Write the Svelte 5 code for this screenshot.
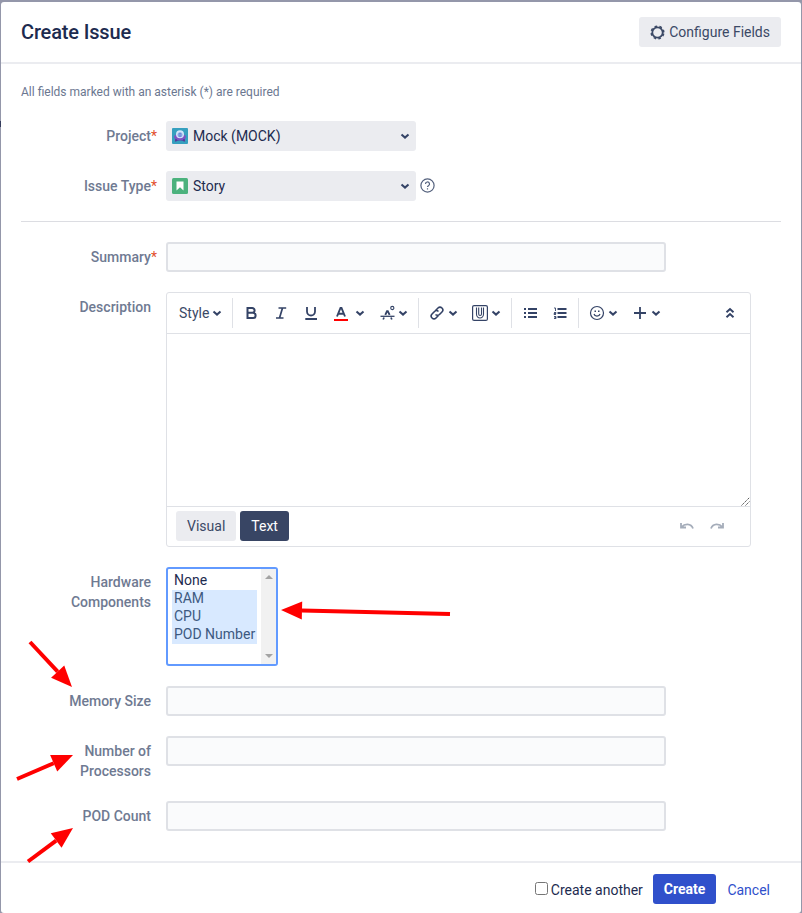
<script>
  const tools = [
    { icon: 'bold', gap: 10 },
    { icon: 'italic', gap: 14 },
    { icon: 'underline', gap: 14 },
    { icon: 'color', gap: 14 },
    { icon: 'chevron', gap: 6 },
    { icon: 'clear', gap: 15 },
    { icon: 'chevron', gap: 2 },
    { icon: 'sep', gap: 10 },
    { icon: 'link', gap: 10 },
    { icon: 'chevron', gap: 3 },
    { icon: 'attach', gap: 14 },
    { icon: 'chevron', gap: 3 },
    { icon: 'sep', gap: 10 },
    { icon: 'bullets', gap: 10 },
    { icon: 'numbers', gap: 14 },
    { icon: 'sep', gap: 10 },
    { icon: 'smile', gap: 10 },
    { icon: 'chevron', gap: 3 },
    { icon: 'plus', gap: 14 },
    { icon: 'chevron', gap: 3 }
  ];

  const options = [
    { name: 'None', on: false },
    { name: 'RAM', on: true },
    { name: 'CPU', on: true },
    { name: 'POD Number', on: true }
  ];

  const arrows = [
    [450, 614, 281, 610],
    [30, 642, 72, 687],
    [17, 779, 73, 755],
    [28, 861.5, 73, 828]
  ].map(([x1, y1, x2, y2]) => {
    const d = Math.hypot(x2 - x1, y2 - y1);
    const ux = (x2 - x1) / d;
    const uy = (y2 - y1) / d;
    const bx = x2 - ux * 21;
    const by = y2 - uy * 21;
    return {
      x1, y1, bx, by,
      head: `${x2},${y2} ${bx - uy * 9},${by + ux * 9} ${bx + uy * 9},${by - ux * 9}`
    };
  });
</script>

{#snippet chevron()}
  <svg class="chev" width="10" height="8" viewBox="0 0 10 8"><path d="M1.500 2.400 5 5.600l3.500-3.200" /></svg>
{/snippet}

{#snippet glyph(name)}
  <svg class="glyph" width="16" height="16" viewBox="0 0 16 16">
    {#if name === 'bold'}
      <path stroke-width="2" d="M4.500 3h4.700a2.300 2.300 0 0 1 0 4.800H4.500zM4.500 7.800h5.500a2.600 2.600 0 0 1 0 5.200H4.500z" />
    {:else if name === 'italic'}
      <path stroke-width="1.700" d="M5.500 3h7.700M3 13h7.500M9.500 3l-3 10" />
    {:else if name === 'underline'}
      <path stroke-width="1.800" d="M4 2v4.500a4 4 0 0 0 8 0V2M2.300 14h11.700" />
    {:else if name === 'color'}
      <path stroke-width="1.900" d="M4 11.500 7.500 3h1L12 11.500M5.300 8.800h5.400" />
      <path class="red" d="M1 15h14" />
    {:else if name === 'clear'}
      <path stroke-width="1.300" d="M.5 11.300h14" />
      <path stroke-width="1.900" d="M5.300 9.800 7 6.200h.8L9.600 9.800" />
      <path stroke-width="1.700" d="m4 12.500-.8 2M11 12.500l.8 2" />
      <circle cx="12.300" cy="3" r="1.600" stroke-width="1.100" />
    {:else if name === 'link'}
      <g transform="rotate(-45 8 8)" stroke-width="1.600">
        <path d="M7.200 10.800H3.800a2.800 2.800 0 0 1 0-5.600h3.500a2.800 2.800 0 0 1 2.800 2.800" />
        <path d="M8.800 5.200h3.400a2.800 2.800 0 0 1 0 5.600H8.700A2.800 2.800 0 0 1 5.900 8" />
      </g>
    {:else if name === 'attach'}
      <rect x=".6" y=".6" width="14.800" height="14.800" rx="1.500" stroke-width="1.200" />
      <path stroke-width="1.100" d="M4.500 2.500V9a3.500 4 0 0 0 7 0V2.500M9.500 2.500V9a1.400 1.500 0 0 1-2.800 0V2.500" />
    {:else if name === 'bullets'}
      <path stroke-width="1.900" d="M6 4h9M6 8h9M6 12h9" />
      <path stroke-width="1.900" d="M2 4h2M2 8h2M2 12h2" />
    {:else if name === 'numbers'}
      <path stroke-width="1.900" d="M5.500 4h9M5.500 8h9M5.500 12h9" />
      <path stroke-width=".9" d="M2 3h1.500v3M2 7.500h2v1H2v1h2M2 11.500h2v1H2.500M4 12.500v1H2" />
    {:else if name === 'smile'}
      <circle cx="8" cy="8" r="6.500" stroke-width="1.200" />
      <path stroke-width="1.400" d="M5.500 6.300h1.500M9 6.300h1.500" />
      <path stroke-width="1.200" d="M5 9c.7 2.700 5.300 2.700 6 0" />
    {:else if name === 'plus'}
      <path stroke-width="1.800" d="M8 2v12M2 8h12" />
    {:else if name === 'collapse'}
      <path stroke-width="1.900" d="m4.500 7.300 3.500-3.300 3.500 3.300M4.500 12.300 8 9l3.500 3.300" />
    {/if}
  </svg>
{/snippet}

<div class="page">
  <section class="dialog">
    <header>
      <h2>Create Issue</h2>
      <button class="btn configure">
        <svg width="15" height="15" viewBox="0 0 15 15">
          <circle cx="7.500" cy="7.500" r="5.200" fill="none" stroke="#3b4966" stroke-width="1.800" />
          <circle cx="7.500" cy="7.500" r="6.300" fill="none" stroke="#3b4966" stroke-width="1.500" stroke-dasharray="2.600 2.348" stroke-dashoffset="-1.200" />
        </svg>
        Configure Fields
      </button>
    </header>

    <main>
      <p class="hint">All fields marked with an asterisk (*) are required</p>
      <div class="row">
        <span class="label">Project<i>*</i></span>
        <div class="picker">
          <svg width="16" height="16" viewBox="0 0 16 16">
            <rect width="16" height="16" rx="1" fill="#36a0bf" />
            <path d="m4.500 11-1 2.500M11.500 11l1 2.500" stroke="#5b3194" stroke-width="1.500" />
            <ellipse cx="8" cy="9" rx="6" ry="3.200" fill="#8052c2" />
            <path d="M3 10.500c2 2.500 8 2.500 10 0l-1 2.200H4z" fill="#56309a" />
            <circle cx="8" cy="6.200" r="4" fill="#d5e5fa" />
            <circle cx="8" cy="6.700" r="2.500" fill="#8aa9e6" />
            <path d="M7 5.500h2M6.700 7h2.600M7 8.300h2" stroke="#5577cc" stroke-width=".6" />
          </svg>
          <span>Mock (MOCK)</span>{@render chevron()}
        </div>
      </div>
      <div class="row">
        <span class="label">Issue Type<i>*</i></span>
        <div class="picker">
          <svg width="16" height="16" viewBox="0 0 16 16">
            <rect width="16" height="16" rx="1.500" fill="#4bb27d" />
            <path d="M4.500 3.500h7v9L8 9.200l-3.500 3.300z" fill="#fff" />
          </svg>
          <span>Story</span>{@render chevron()}
        </div>
        <svg class="help" width="15" height="15" viewBox="0 0 15 15">
          <circle cx="7.500" cy="7.500" r="6.600" />
          <path d="M5.500 6a2 2 0 1 1 3 1.700c-.7.400-1 .6-1 1.300M7.500 10.200v1.400" />
        </svg>
      </div>
      <hr />
      <div class="row">
        <span class="label">Summary<i>*</i></span>
        <input type="text" />
      </div>
      <div class="row">
        <span class="label">Description</span>
        <div class="editor">
          <div class="toolbar">
            <span class="style">Style</span>{@render chevron()}
            <span class="sep first"></span>
            {#each tools as t}
              <span class="tool" style="margin-left: {t.gap}px">
                {#if t.icon === 'sep'}<span class="sep"></span>
                {:else if t.icon === 'chevron'}{@render chevron()}
                {:else}{@render glyph(t.icon)}{/if}
              </span>
            {/each}
            <span class="tool last">{@render glyph('collapse')}</span>
          </div>
          <div class="area">
            <svg width="9" height="9" viewBox="0 0 9 9"><path d="m.5 8.500 8-8M4.500 8.500l4-4" stroke="#555" fill="none" stroke-dasharray="1.600 .7" /></svg>
          </div>
          <div class="modes">
            <button class="btn">Visual</button>
            <button class="btn dark">Text</button>
            <span class="history">
              <svg width="14" height="10" viewBox="0 0 14 10"><path d="M1 2v4.500h5M1.500 6C4.500 2.500 11 1.800 13 7.500" /></svg>
              <svg width="14" height="10" viewBox="0 0 14 10"><path d="M13 2v4.500H8M12.500 6C9.500 2.500 3 1.800 1 7.500" /></svg>
            </span>
          </div>
        </div>
      </div>
      <div class="row">
        <span class="label">Hardware<br />Components</span>
        <div class="listbox">
          <ul>
            {#each options as o}<li class:on={o.on}>{o.name}</li>{/each}
          </ul>
          <div class="track">
            <svg width="8" height="4" viewBox="0 0 8 4"><path d="M0 4 4 0l4 4z" /></svg>
            <svg width="8" height="4" viewBox="0 0 8 4"><path d="m0 0 4 4 4-4z" /></svg>
          </div>
        </div>
      </div>
      <div class="row"><span class="label">Memory Size</span><input type="text" /></div>
      <div class="row"><span class="label">Number of<br />Processors</span><input type="text" /></div>
      <div class="row"><span class="label">POD Count</span><input type="text" /></div>
    </main>

    <footer>
      <label><input type="checkbox" />Create another</label>
      <button class="btn primary">Create</button>
      <a href="#cancel">Cancel</a>
    </footer>
  </section>

  <span class="behind"></span>
  <svg class="arrows" width="802" height="913" viewBox="0 0 802 913">
    {#each arrows as a}
      <line x1={a.x1} y1={a.y1} x2={a.bx} y2={a.by} />
      <polygon points={a.head} />
    {/each}
  </svg>
</div>

<style>
  .page {
    position: relative;
    box-sizing: border-box;
    width: 802px;
    height: 913px;
    padding: 2px 1px 0;
    overflow: hidden;
    background: #9497aa;
    color: #1d2b4f;
    font: 14px/20px Roboto, sans-serif;
  }
  .page * { box-sizing: border-box; }
  .dialog {
    display: flex;
    flex-direction: column;
    height: 911px;
    background: #fff;
    border-radius: 3px;
  }
  header {
    display: flex;
    align-items: center;
    justify-content: space-between;
    height: 62px;
    padding: 0 20px;
    border-bottom: 2px solid #ebecf0;
  }
  h2 { margin: 0; font-size: 20px; font-weight: 500; line-height: 24px; letter-spacing: -0.16px; }
  .btn {
    height: 30px;
    padding: 0 11px;
    border: 0;
    border-radius: 3px;
    background: #ebecf0;
    color: #3b4966;
    font: 14px/20px Roboto, sans-serif;
    white-space: nowrap;
  }
  .configure { display: flex; align-items: center; gap: 4px; }
  main { height: 797px; padding: 18px 20px 0; }
  .hint { margin: 0 0 19px; font-size: 12px; color: #6b7790; }
  .row { display: flex; align-items: flex-start; margin-bottom: 20px; }
  .label {
    width: 130px;
    margin-right: 15px;
    padding-top: 5px;
    text-align: right;
    font-weight: 500;
    color: #6f7a92;
    white-space: nowrap;
  }
  .label i { margin-right: -6px; color: #e2502d; font-style: normal; font-weight: 400; }
  .picker {
    display: flex;
    align-items: center;
    width: 250px;
    height: 30px;
    padding: 0 6px;
    border-radius: 3px;
    background: #ebecf0;
  }
  .picker span { flex: 1; margin-left: 5px; }
  .chev { flex: none; fill: none; stroke: #344366; stroke-width: 2; }
  .help { margin: 7px 0 0 4px; fill: none; stroke: #54617d; stroke-width: 1.2; }
  hr { height: 1px; margin: 0 0 20px; border: 0; background: #dcdde2; }
  input[type='text'] {
    width: 500px;
    height: 30px;
    border: 2px solid #dfe1e6;
    border-radius: 3px;
    background: #fafbfc;
  }
  .editor { width: 585px; height: 255px; border: 1px solid #dfe1e6; border-radius: 3px; }
  .toolbar {
    display: flex;
    align-items: center;
    height: 41px;
    padding: 0 12px;
    border-bottom: 1px solid #dfe1e6;
    color: #3b4966;
  }
  .style { width: 33px; }
  .sep { display: block; width: 1px; height: 30px; background: #dfe1e6; }
  .first { margin-left: 10px; }
  .tool { display: flex; flex: none; align-items: center; }
  .last { margin-left: auto; }
  .glyph { fill: none; stroke: #344366; }
  .glyph .red { stroke: #f00; stroke-width: 2; }
  .area {
    display: flex;
    align-items: flex-end;
    justify-content: flex-end;
    height: 173px;
    border-bottom: 1px solid #dfe1e6;
  }
  .modes { display: flex; align-items: center; gap: 4px; height: 38px; padding: 0 26px 0 9px; }
  .modes .dark { background: #384564; color: #fff; }
  .history { display: flex; gap: 16px; margin-left: auto; }
  .history path { fill: none; stroke: #a5adba; stroke-width: 1.8; }
  .listbox {
    display: flex;
    width: 112px;
    height: 99px;
    border: 2px solid #629aff;
    border-radius: 3px;
    overflow: hidden;
  }
  ul { flex: 1; margin: 0; padding: 3px 4px 0; list-style: none; }
  li { height: 18px; padding-left: 2px; line-height: 17px; white-space: nowrap; }
  .on { background: #d8e9ff; color: #3d597f; }
  .track {
    display: flex;
    flex-direction: column;
    align-items: center;
    justify-content: space-between;
    width: 15px;
    padding: 6px 0;
    background: #f1f1f1;
    fill: #a3a3a3;
  }
  footer {
    display: flex;
    align-items: center;
    justify-content: flex-end;
    height: 52px;
    padding: 2px 31px 0 0;
    border-top: 2px solid #ebecf0;
  }
  footer label { display: flex; align-items: center; padding-top: 1px; }
  footer input { width: 13px; height: 13px; margin: 0 3px 3px 0; }
  .primary { margin: 0 11px 0 10px; background: #3050cb; color: #fff; font-weight: 700; }
  a { padding-top: 1px; color: #3050cb; text-decoration: none; }
  .behind { position: absolute; top: 121px; left: 0; width: 1px; height: 6px; background: #343c5c; }
  .arrows { position: absolute; top: 0; left: 0; fill: #f00; stroke-width: 4; pointer-events: none; }
  .arrows line { stroke: #f00; }
</style>
